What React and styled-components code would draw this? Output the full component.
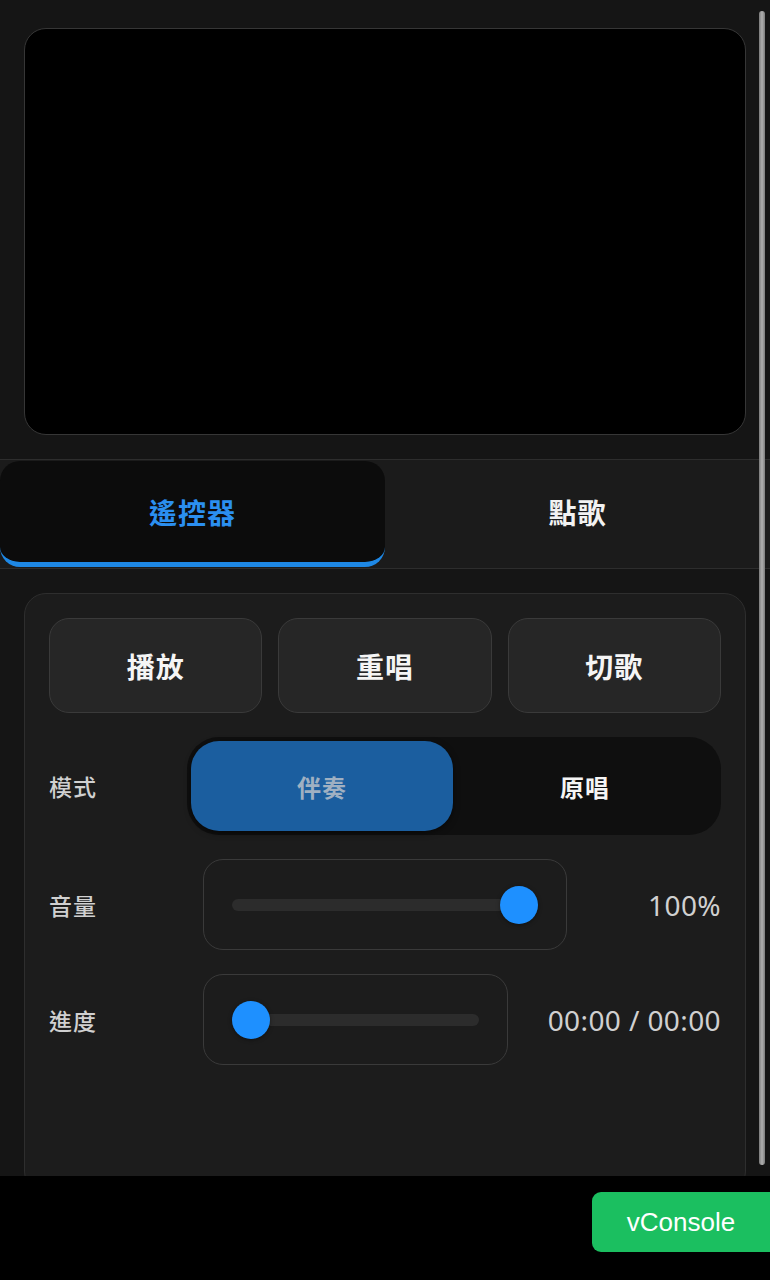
import styled, { createGlobalStyle } from "styled-components";

const GlobalStyle = createGlobalStyle`
  html, body {
    margin: 0;
    padding: 0;
    background: #000;
  }
  * {
    box-sizing: border-box;
  }
  body {
    font-family: "Noto Sans", "Noto Sans CJK TC", sans-serif;
  }
`;

const Page = styled.div`
  width: 770px;
  height: 1280px;
  display: flex;
  flex-direction: column;
  overflow: hidden;
`;

const Screen = styled.div`
  position: relative;
  height: 1176px;
  overflow: hidden;
  background: #151515;
`;

const VideoWrap = styled.div`
  padding: 28px 24px 24px;
`;

const Video = styled.div`
  height: 407px;
  background: #000;
  border: 1px solid #363636;
  border-radius: 22px;
`;

const TabBar = styled.div`
  display: grid;
  grid-template-columns: 385px 1fr;
  height: 110px;
  padding-top: 1px;
  background: #1b1b1b;
  border-top: 1px solid #2d2d2d;
  border-bottom: 1px solid #2d2d2d;
`;

const Tab = styled.div`
  height: 106px;
  display: flex;
  align-items: center;
  justify-content: center;
  font-size: 28px;
  font-weight: 700;
  letter-spacing: 1px;
  color: ${(p) => (p.$active ? "#2b8ff0" : "#f2f2f2")};
  background: ${(p) => (p.$active ? "#0c0c0c" : "transparent")};
  border-radius: 20px;
  border-bottom: 5px solid ${(p) => (p.$active ? "#1e88e5" : "transparent")};
`;

const Content = styled.div`
  padding: 24px;
`;

const Card = styled.div`
  height: 600px;
  background: #1c1c1c;
  border: 1px solid #2e2e2e;
  border-radius: 22px;
  padding: 24px;
  display: flex;
  flex-direction: column;
  gap: 24px;
`;

const ButtonRow = styled.div`
  display: grid;
  grid-template-columns: repeat(3, 1fr);
  gap: 16px;
`;

const ActionButton = styled.button`
  height: 95px;
  background: #262626;
  border: 1px solid #3a3a3a;
  border-radius: 20px;
  color: #f5f5f5;
  font-family: inherit;
  font-size: 28px;
  font-weight: 700;
  letter-spacing: 1px;
`;

const Row = styled.div`
  display: flex;
  align-items: center;
`;

const Label = styled.div`
  width: 138px;
  flex-shrink: 0;
  font-size: 23px;
  font-weight: 500;
  color: #d0d0d0;
  letter-spacing: 1px;
`;

const Segmented = styled.div`
  flex: 1;
  height: 98px;
  display: grid;
  grid-template-columns: 262px 1fr;
  padding: 4px;
  background: #0f0f0f;
  border-radius: 32px;
`;

const Segment = styled.div`
  display: flex;
  align-items: center;
  justify-content: center;
  border-radius: 28px;
  font-size: 24px;
  font-weight: 700;
  letter-spacing: 1px;
  color: ${(p) => (p.$active ? "#9fb0c2" : "#f5f5f5")};
  background: ${(p) => (p.$active ? "#1b5e9f" : "transparent")};
  box-shadow: ${(p) => (p.$active ? "0 2px 6px rgba(0,0,0,0.5)" : "none")};
`;

const SliderBox = styled.div`
  flex: 1;
  margin-left: 16px;
  height: 91px;
  display: flex;
  align-items: center;
  padding: 0 28px;
  border: 1px solid #3a3a3a;
  border-radius: 20px;
`;

const Track = styled.div`
  position: relative;
  flex: 1;
  height: 12px;
  border-radius: 6px;
  background: #2c2c2c;
`;

const Thumb = styled.div`
  position: absolute;
  top: 50%;
  width: 38px;
  height: 38px;
  margin-top: -19px;
  border-radius: 50%;
  background: #1e90ff;
  box-shadow: 0 1px 4px rgba(0, 0, 0, 0.4);
`;

const Value = styled.div`
  margin-left: 40px;
  min-width: 114px;
  text-align: right;
  font-size: 28px;
  letter-spacing: 0.4px;
  color: #d0d0d0;
  white-space: nowrap;
`;

const ScrollThumb = styled.div`
  position: absolute;
  right: 5px;
  top: 11px;
  width: 6px;
  height: 1154px;
  border-radius: 3px;
  background: linear-gradient(90deg, #7a7a7a, #b0b0b0 50%, #7a7a7a);
`;

const BottomBar = styled.div`
  flex: 1;
  background: #000;
  display: flex;
  justify-content: flex-end;
  padding-top: 16px;
`;

const ConsoleButton = styled.div`
  width: 178px;
  height: 60px;
  background: #1bbf60;
  border-radius: 9px 0 0 9px;
  display: flex;
  align-items: center;
  justify-content: center;
  color: #fff;
  font-family: "Liberation Sans", Arial, sans-serif;
  font-size: 26px;
`;

const Slider = ({ value }) => (
  <SliderBox>
    <Track>
      <Thumb style={{ left: `calc(${value}% - ${(value / 100) * 38}px)` }} />
    </Track>
  </SliderBox>
);

const App = () => {
  return (
    <Page>
      <GlobalStyle />
      <Screen>
        <VideoWrap>
          <Video />
        </VideoWrap>
        <TabBar>
          <Tab $active>遙控器</Tab>
          <Tab>點歌</Tab>
        </TabBar>
        <Content>
          <Card>
            <ButtonRow>
              <ActionButton>播放</ActionButton>
              <ActionButton>重唱</ActionButton>
              <ActionButton>切歌</ActionButton>
            </ButtonRow>
            <Row>
              <Label>模式</Label>
              <Segmented>
                <Segment $active>伴奏</Segment>
                <Segment>原唱</Segment>
              </Segmented>
            </Row>
            <Row>
              <Label>音量</Label>
              <Slider value={100} />
              <Value>100%</Value>
            </Row>
            <Row>
              <Label>進度</Label>
              <Slider value={0} />
              <Value>00:00 / 00:00</Value>
            </Row>
          </Card>
        </Content>
        <ScrollThumb />
      </Screen>
      <BottomBar>
        <ConsoleButton>vConsole</ConsoleButton>
      </BottomBar>
    </Page>
  );
};

export default App;
